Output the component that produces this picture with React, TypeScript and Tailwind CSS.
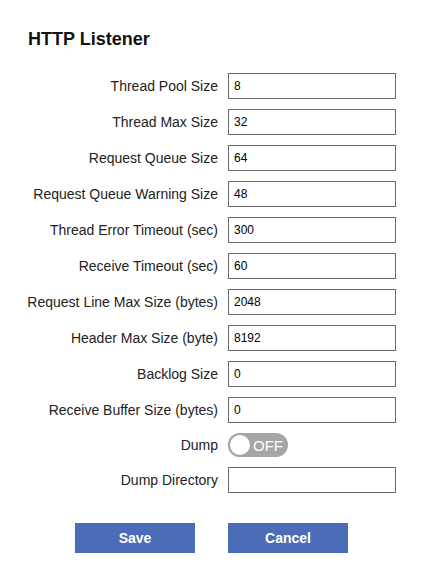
import React from "react";

const fields: { label: string; value: string }[] = [
  { label: "Thread Pool Size", value: "8" },
  { label: "Thread Max Size", value: "32" },
  { label: "Request Queue Size", value: "64" },
  { label: "Request Queue Warning Size", value: "48" },
  { label: "Thread Error Timeout (sec)", value: "300" },
  { label: "Receive Timeout (sec)", value: "60" },
  { label: "Request Line Max Size (bytes)", value: "2048" },
  { label: "Header Max Size (byte)", value: "8192" },
  { label: "Backlog Size", value: "0" },
  { label: "Receive Buffer Size (bytes)", value: "0" },
];

function Toggle() {
  return (
    <div className="flex items-center w-[60px] h-[24px] rounded-full bg-[#a6a6a6]">
      <div className="w-[24px] h-[24px] rounded-full bg-white border-2 border-[#a6a6a6]" />
      <span className="ml-[1px] text-[15px] text-white leading-none">OFF</span>
    </div>
  );
}

export default function App() {
  return (
    <div className="bg-white w-[423px] h-[582px] pt-[29px] font-['Liberation_Sans',Arial,sans-serif] text-[#222]">
      <h3 className="pl-[28px] text-[18px] leading-[21px] font-bold text-[#111]">HTTP Listener</h3>

      <div className="mt-[23px] grid grid-cols-[228px_168px] gap-y-[10px] items-center">
        {fields.map((f) => (
          <React.Fragment key={f.label}>
            <label className="text-right pr-[10px] text-[14px]">{f.label}</label>
            <div className="h-[26px] border border-[#6b6b6b] pl-[5px] flex items-center text-[12px] text-black">
              {f.value}
            </div>
          </React.Fragment>
        ))}
        <label className="text-right pr-[10px] text-[14px]">Dump</label>
        <div className="h-[24px] flex items-center">
          <Toggle />
        </div>
        <label className="text-right pr-[10px] text-[14px]">Dump Directory</label>
        <div className="h-[26px] border border-[#6b6b6b]" />
      </div>

      <div className="mt-[30px] flex pl-[75px] gap-[33px]">
        <button className="w-[120px] h-[30px] bg-[#4b6cb7] text-white text-[14px] font-bold">Save</button>
        <button className="w-[120px] h-[30px] bg-[#4b6cb7] text-white text-[14px] font-bold">Cancel</button>
      </div>
    </div>
  );
}
